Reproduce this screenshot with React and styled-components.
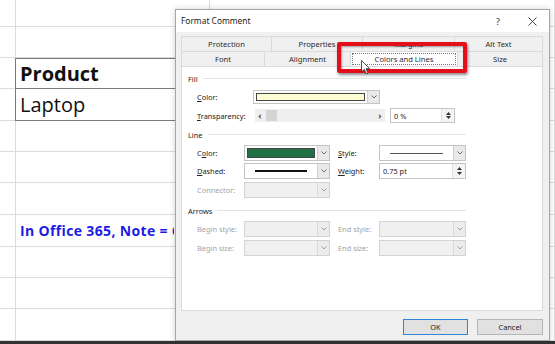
import React from 'react';
import styled, { createGlobalStyle } from 'styled-components';

const GlobalStyle = createGlobalStyle`
  html, body {
    margin: 0;
    padding: 0;
    background: #ffffff;
    overflow: hidden;
  }
  #root {
    width: 555px;
    height: 344px;
    position: relative;
    overflow: hidden;
  }
`;

const UI_FONT = `"Noto Sans", "Open Sans", sans-serif`;
const SHEET_FONT = `"Open Sans", "Noto Sans", sans-serif`;

/* ---------- spreadsheet behind the dialog ---------- */

const Sheet = styled.div`
  display: flex;
  flex-direction: column;
  width: 555px;
`;

const SheetRow = styled.div`
  display: grid;
  grid-template-columns: 16px 194px 1fr;
  height: ${p => p.$h}px;
  box-sizing: border-box;
  border-bottom: 1px solid #dcdcdc;
`;

const Cell = styled.div`
  border-right: 1px solid #dcdcdc;
  display: flex;
  align-items: center;
  font-family: ${SHEET_FONT};
  white-space: nowrap;
`;

const TableCell = styled.div`
  margin: -1px 0 -1px -1px;
  height: calc(100% + 1px);
  width: 100%;
  box-sizing: border-box;
  border: 1px solid #7a7a7a;
  border-top: ${p => (p.$first ? '1px solid #7a7a7a' : 'none')};
  padding-left: 4px;
  display: flex;
  align-items: center;
  font-family: ${SHEET_FONT};
  font-size: 20px;
  font-weight: ${p => (p.$bold ? 700 : 400)};
  color: #111;
`;

// the rest of the sentence sits under the dialog, so it is cut at its edge
const NoteText = styled.div`
  box-sizing: border-box;
  width: 158px;
  overflow: hidden;
  padding-left: 4px;
  font-size: 14px;
  font-weight: 700;
  color: #1c1ce6;
  letter-spacing: 0.35px;
`;

const TaskStrip = styled.div`
  height: 3px;
  background: #333;
`;

/* ---------- dialog ---------- */

const Window = styled.div`
  position: absolute;
  left: 175px;
  top: 9px;
  width: 375px;
  height: 332px;
  box-sizing: border-box;
  background: #f0f0f0;
  border: 1px solid #a6a6a6;
  box-shadow: 0 0 6px rgba(0, 0, 0, 0.18);
  display: flex;
  flex-direction: column;
  font-family: ${UI_FONT};
  color: #1b1b1b;
`;

const TitleBar = styled.div`
  height: 22px;
  background: #ffffff;
  display: flex;
  align-items: center;
  padding-left: 5px;
  font-size: 8.4px;
`;

const TitleText = styled.div`
  flex: 1;
  margin-top: -1px;
`;

const TitleButton = styled.div`
  width: 34px;
  display: flex;
  justify-content: center;
  align-items: center;
  font-size: 9px;
  color: #333;
`;

const Body = styled.div`
  flex: 1;
  display: flex;
  flex-direction: column;
  padding: 4px 6px 5px 5px;
`;

const TabRow = styled.div`
  display: flex;
  height: 15px;
`;

const Tab = styled.div`
  flex: 0 0 ${p => p.$w}px;
  box-sizing: border-box;
  display: flex;
  align-items: center;
  justify-content: center;
  font-size: 7.6px;
  color: #2a2a2a;
  background: ${p => (p.$active ? '#ffffff' : '#f0f0f0')};
  border-top: 1px solid #dadada;
  border-right: 1px solid #dadada;
  &:first-child {
    border-left: 1px solid #dadada;
  }
`;

const FocusRect = styled.div`
  box-sizing: border-box;
  width: 104px;
  height: 12px;
  border: 1px dotted #777;
  display: flex;
  align-items: center;
  justify-content: center;
  background: #fff;
`;

const Panel = styled.div`
  height: 245px;
  box-sizing: border-box;
  background: #ffffff;
  border: 1px solid #dadada;
  padding: 5px 0 0 6px;
  display: flex;
  flex-direction: column;
`;

const SectionHead = styled.div`
  width: 278px;
  height: 13px;
  margin-top: ${p => p.$mt || 0}px;
  display: flex;
  align-items: center;
  gap: 5px;
  font-size: 7.4px;
  &::after {
    content: '';
    flex: 1;
    height: 1px;
    background: #e3e3e3;
  }
`;

const FieldRow = styled.div`
  display: flex;
  align-items: center;
  height: ${p => p.$h}px;
  margin-top: ${p => p.$mt}px;
  padding-left: 9px;
`;

const Label = styled.div`
  flex: 0 0 ${p => p.$w}px;
  font-size: 7.4px;
  color: ${p => (p.$disabled ? '#a3a3a3' : '#222')};
  white-space: nowrap;
  u {
    text-decoration-thickness: 0.6px;
    text-underline-offset: 1px;
  }
`;

const Combo = styled.div`
  flex: 0 0 ${p => p.$w}px;
  height: 100%;
  box-sizing: border-box;
  display: flex;
  border: 1px solid ${p => (p.$disabled ? '#d3d3d3' : '#c4c4c4')};
  background: ${p => (p.$disabled ? '#f0f0f0' : '#ffffff')};
  margin-right: ${p => p.$mr || 0}px;
`;

const ComboValue = styled.div`
  flex: 1;
  display: flex;
  align-items: center;
  padding: 2px;
  box-sizing: border-box;
`;

const Swatch = styled.div`
  width: 100%;
  height: 100%;
  box-sizing: border-box;
  border: 1px solid #444;
  background: ${p => p.$color};
`;

const LineSample = styled.div`
  width: 100%;
  margin: 0 8px;
  height: ${p => p.$thick}px;
  background: ${p => p.$color};
`;

const ArrowButton = styled.div`
  flex: 0 0 12px;
  box-sizing: border-box;
  border-left: 1px solid ${p => (p.$disabled ? '#d9d9d9' : '#cfcfcf')};
  background: ${p => (p.$disabled ? '#ececec' : '#e9e9e9')};
  display: flex;
  align-items: center;
  justify-content: center;
`;

const Slider = styled.div`
  flex: 0 0 130px;
  height: 13px;
  background: #efefef;
  display: flex;
  align-items: center;
  font-size: 9px;
  font-weight: 700;
  color: #444;
  margin-right: 5px;
`;

const SliderArrow = styled.div`
  flex: 0 0 10px;
  text-align: center;
  line-height: 1;
  margin-top: -1px;
`;

const SliderThumb = styled.div`
  width: 11px;
  height: 11px;
  background: #d4d4d4;
  margin-left: 1px;
`;

const SliderTrack = styled.div`
  flex: 1;
`;

const Spin = styled.div`
  flex: 0 0 ${p => p.$w}px;
  height: 100%;
  box-sizing: border-box;
  border: 1px solid #c4c4c4;
  background: #fff;
  display: flex;
`;

const SpinText = styled.div`
  flex: 1;
  display: flex;
  align-items: center;
  padding-left: 3px;
  font-size: 7.4px;
`;

const SpinButtons = styled.div`
  flex: 0 0 13px;
  border-left: 1px solid #e0e0e0;
  background: #f4f4f4;
  display: flex;
  flex-direction: column;
  justify-content: space-around;
  align-items: center;
  padding: 2px 0;
  box-sizing: border-box;
`;

const Footer = styled.div`
  display: flex;
  justify-content: flex-end;
  gap: 9px;
  margin-top: 8px;
`;

const DialogButton = styled.div`
  width: ${p => p.$w}px;
  height: 16px;
  box-sizing: border-box;
  background: #e1e1e1;
  border: 1px solid ${p => (p.$primary ? '#2f86d6' : '#b5b5b5')};
  display: flex;
  align-items: center;
  justify-content: center;
  font-size: 7.4px;
  color: #222;
`;

const Highlight = styled.div`
  position: absolute;
  left: 161px;
  top: 32px;
  width: 130px;
  height: 31px;
  box-sizing: border-box;
  border: 4px solid #e3101b;
  border-radius: 2px;
  box-shadow: 1px 2px 3px rgba(0, 0, 0, 0.45), inset 1px 1px 2px rgba(0, 0, 0, 0.35);
  pointer-events: none;
`;

const Pointer = styled.svg`
  position: absolute;
  left: 185px;
  top: 50px;
`;

function Chevron({ color = '#606060' }) {
  return (
    <svg width="6" height="4" viewBox="0 0 6 4">
      <polyline points="0.5,0.5 3,3 5.5,0.5" fill="none" stroke={color} strokeWidth="0.9" />
    </svg>
  );
}

function SpinArrows() {
  return (
    <SpinButtons>
      <svg width="5" height="3" viewBox="0 0 5 3"><polygon points="0,3 2.5,0 5,3" fill="#333" /></svg>
      <svg width="5" height="3" viewBox="0 0 5 3"><polygon points="0,0 5,0 2.5,3" fill="#333" /></svg>
    </SpinButtons>
  );
}

function Dropdown({ w, disabled, mr, children }) {
  return (
    <Combo $w={w} $disabled={disabled} $mr={mr}>
      <ComboValue>{children}</ComboValue>
      <ArrowButton $disabled={disabled}>
        <Chevron color={disabled ? '#9a9a9a' : '#606060'} />
      </ArrowButton>
    </Combo>
  );
}

const rowHeights = [27, 31, 31, 32, 31, 31, 32, 32, 31, 31, 32];

export default function App() {
  return (
    <>
      <GlobalStyle />
      <Sheet>
        {rowHeights.map((h, i) => (
          <SheetRow key={i} $h={h}>
            <Cell />
            <Cell>
              {i === 2 && <TableCell $first $bold>Product</TableCell>}
              {i === 3 && <TableCell>Laptop</TableCell>}
              {i === 7 && <NoteText>In Office 365, Note = Comment</NoteText>}
            </Cell>
            <Cell />
          </SheetRow>
        ))}
        <TaskStrip />
      </Sheet>

      <Window>
        <TitleBar>
          <TitleText>Format Comment</TitleText>
          <TitleButton>?</TitleButton>
          <TitleButton>
            <svg width="9" height="9" viewBox="0 0 9 9">
              <path d="M0.5 0.5 L8.5 8.5 M8.5 0.5 L0.5 8.5" stroke="#333" strokeWidth="0.9" />
            </svg>
          </TitleButton>
        </TitleBar>

        <Body>
          <TabRow>
            <Tab $w={91}>Protection</Tab>
            <Tab $w={91}>Properties</Tab>
            <Tab $w={92}>Margins</Tab>
            <Tab $w={88}>Alt Text</Tab>
          </TabRow>
          <TabRow>
            <Tab $w={84}>Font</Tab>
            <Tab $w={86}>Alignment</Tab>
            <Tab $w={107} $active>
              <FocusRect>Colors and Lines</FocusRect>
            </Tab>
            <Tab $w={85}>Size</Tab>
          </TabRow>

          <Panel>
            <SectionHead>Fill</SectionHead>
            <FieldRow $h={14} $mt={5}>
              <Label $w={56}><u>C</u>olor:</Label>
              <Dropdown w={127}>
                <Swatch $color="#fdfdd3" />
              </Dropdown>
            </FieldRow>
            <FieldRow $h={15} $mt={4}>
              <Label $w={58}><u>T</u>ransparency:</Label>
              <Slider>
                <SliderArrow>&lsaquo;</SliderArrow>
                <SliderThumb />
                <SliderTrack />
                <SliderArrow>&rsaquo;</SliderArrow>
              </Slider>
              <Spin $w={65}>
                <SpinText>0 %</SpinText>
                <SpinArrows />
              </Spin>
            </FieldRow>

            <SectionHead $mt={5}>Line</SectionHead>
            <FieldRow $h={16} $mt={4}>
              <Label $w={47}>C<u>o</u>lor:</Label>
              <Dropdown w={86} mr={8}>
                <Swatch $color="#1e7145" />
              </Dropdown>
              <Label $w={41}><u>S</u>tyle:</Label>
              <Dropdown w={87}>
                <LineSample $thick={1} $color="#555" />
              </Dropdown>
            </FieldRow>
            <FieldRow $h={16} $mt={2}>
              <Label $w={47}><u>D</u>ashed:</Label>
              <Dropdown w={86} mr={8}>
                <LineSample $thick={2} $color="#111" />
              </Dropdown>
              <Label $w={41}><u>W</u>eight:</Label>
              <Spin $w={87}>
                <SpinText>0.75 pt</SpinText>
                <SpinArrows />
              </Spin>
            </FieldRow>
            <FieldRow $h={16} $mt={3}>
              <Label $w={47} $disabled>Connector:</Label>
              <Dropdown w={86} disabled />
            </FieldRow>

            <SectionHead $mt={6}>Arrows</SectionHead>
            <FieldRow $h={16} $mt={4}>
              <Label $w={47} $disabled>Begin style:</Label>
              <Dropdown w={86} mr={8} disabled />
              <Label $w={41} $disabled>End style:</Label>
              <Dropdown w={87} disabled />
            </FieldRow>
            <FieldRow $h={16} $mt={3}>
              <Label $w={47} $disabled>Begin size:</Label>
              <Dropdown w={86} mr={8} disabled />
              <Label $w={41} $disabled>End size:</Label>
              <Dropdown w={87} disabled />
            </FieldRow>
          </Panel>

          <Footer>
            <DialogButton $w={65} $primary>OK</DialogButton>
            <DialogButton $w={66}>Cancel</DialogButton>
          </Footer>
        </Body>

        <Highlight />
        <Pointer width="10" height="15" viewBox="0 0 10 15">
          <path
            d="M0.5 0.5 L0.5 12 L3.3 9.4 L5.3 13.8 L7 13 L5 8.7 L8.8 8.7 Z"
            fill="#fff"
            stroke="#222"
            strokeWidth="0.8"
          />
        </Pointer>
      </Window>
    </>
  );
}
